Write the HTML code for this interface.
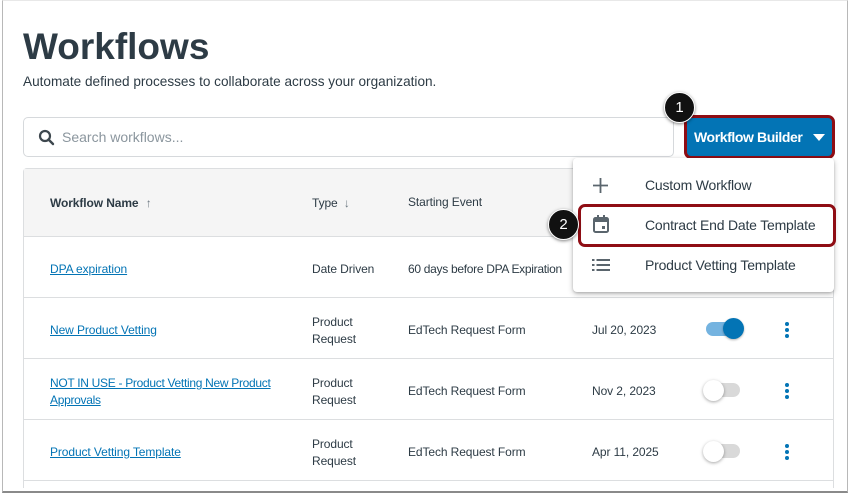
<!DOCTYPE html>
<html><head><meta charset="utf-8"><style>
*{margin:0;padding:0;box-sizing:border-box}
body{width:851px;height:495px;background:#fff;font-family:"Liberation Sans",sans-serif;color:#2d3b45;position:relative;overflow:hidden}
.abs{position:absolute}
.frame{left:2px;top:0;width:846px;height:493px;border-left:1px solid #b8b8b8;border-right:1px solid #b8b8b8;border-bottom:2px solid #8a8a8a;border-top:1px solid #e8e8e8}
h1{position:absolute;left:23px;top:26px;font-size:37px;font-weight:bold;letter-spacing:0}
.sub{left:23px;top:74px;font-size:13.6px}
.search{left:23px;top:117px;width:651px;height:40px;border:1px solid #d6d9dc;border-radius:5px}
.search span{position:absolute;left:38px;top:11px;font-size:14px;color:#8b969e}
.btn{left:686px;top:117px;width:147px;height:40px;background:#0374b5;border-radius:5px;color:#fff;font-size:14px;font-weight:bold;outline:3px solid #8f0d14;outline-offset:-1px}
.btn span{position:absolute;left:8px;top:12px;letter-spacing:-0.4px}
.table{left:23px;top:168px;width:811px;height:320px;border:1px solid #dcdee0;border-bottom:none;border-radius:4px 4px 0 0}
.thead{left:24px;top:169px;width:809px;height:68px;background:#f5f5f5;border-bottom:1px solid #dcdee0}
.row{left:24px;width:809px;height:61px;border-bottom:1px solid #dcdee0}
.t{position:absolute;font-size:12px;color:#2d3b45;letter-spacing:-0.1px}
.lnk{color:#0374b5;text-decoration:underline}
.menu{left:573px;top:158px;width:261px;height:134px;background:#fff;border-radius:4px;box-shadow:0 2px 6px rgba(0,0,0,.25),0 1px 2px rgba(0,0,0,.15)}
.mi{position:absolute;left:72px;font-size:14px;color:#2d3b45;letter-spacing:-0.2px}
.badge{width:31px;height:31px;border-radius:50%;background:#111;color:#fff;font-size:15px;text-align:center;line-height:29px;border:1.5px solid #fff;box-shadow:0 1px 3px rgba(0,0,0,.5)}
.tog{width:34px;height:14px;border-radius:7px}
.knob{width:21px;height:21px;border-radius:50%}
.dots{width:4px}
.dots i{display:block;width:4px;height:4px;border-radius:2px;background:#0374b5;margin-bottom:2px}
</style></head><body>
<div class="abs frame"></div>
<h1>Workflows</h1>
<div class="abs sub">Automate defined processes to collaborate across your organization.</div>
<div class="abs search">
<svg class="abs" style="left:14px;top:11px" width="17" height="17" viewBox="0 0 17 17"><circle cx="7" cy="7" r="5" fill="none" stroke="#3d474e" stroke-width="2.2"/><line x1="10.5" y1="10.5" x2="15" y2="15" stroke="#3d474e" stroke-width="2.4" stroke-linecap="round"/></svg>
<span>Search workflows...</span></div>
<div class="abs btn"><span>Workflow Builder</span><svg class="abs" style="left:127px;top:17px" width="12" height="7" viewBox="0 0 12 7"><path d="M0 0H12L6 7Z" fill="#fff"/></svg></div>

<div class="abs table"></div>
<div class="abs thead">
<div class="t" style="left:26px;top:27px;font-weight:bold">Workflow Name <span style="color:#6b7780;font-weight:normal;margin-left:4px">↑</span></div>
<div class="t" style="left:288px;top:27px">Type <span style="color:#6b7780;margin-left:3px">↓</span></div>
<div class="t" style="left:384px;top:26px">Starting Event</div>
</div>
<div class="abs row" style="top:237px">
<div class="t lnk" style="left:26px;top:25px">DPA expiration</div>
<div class="t" style="left:288px;top:25px">Date Driven</div>
<div class="t" style="left:384px;top:25px;letter-spacing:-0.3px">60 days before DPA Expiration</div>
</div>
<div class="abs row" style="top:298px">
<div class="t lnk" style="left:26px;top:25px">New Product Vetting</div>
<div class="t" style="left:288px;top:16px;line-height:17px">Product<br>Request</div>
<div class="t" style="left:384px;top:25px">EdTech Request Form</div>
<div class="t" style="left:568px;top:25px">Jul 20, 2023</div>
</div>
<div class="abs row" style="top:359px">
<div class="t lnk" style="left:26px;top:16px;line-height:17px;letter-spacing:-0.3px">NOT IN USE - Product Vetting New Product<br>Approvals</div>
<div class="t" style="left:288px;top:16px;line-height:17px">Product<br>Request</div>
<div class="t" style="left:384px;top:25px">EdTech Request Form</div>
<div class="t" style="left:568px;top:25px">Nov 2, 2023</div>
</div>
<div class="abs row" style="top:420px">
<div class="t lnk" style="left:26px;top:25px">Product Vetting Template</div>
<div class="t" style="left:288px;top:16px;line-height:17px">Product<br>Request</div>
<div class="t" style="left:384px;top:25px">EdTech Request Form</div>
<div class="t" style="left:568px;top:25px">Apr 11, 2025</div>
</div>

<div class="abs tog" style="left:706px;top:322px;background:#74b3e0"></div>
<div class="abs knob" style="left:723px;top:318px;background:#0374b5;box-shadow:0 1px 2px rgba(0,0,0,.3)"></div>
<div class="abs tog" style="left:706px;top:383px;background:#d9d9d9"></div>
<div class="abs knob" style="left:703px;top:380px;background:#fff;box-shadow:0 1px 3px rgba(0,0,0,.35)"></div>
<div class="abs tog" style="left:706px;top:444px;background:#d9d9d9"></div>
<div class="abs knob" style="left:703px;top:441px;background:#fff;box-shadow:0 1px 3px rgba(0,0,0,.35)"></div>
<div class="abs dots" style="left:785px;top:322px"><i></i><i></i><i></i></div>
<div class="abs dots" style="left:785px;top:383px"><i></i><i></i><i></i></div>
<div class="abs dots" style="left:785px;top:444px"><i></i><i></i><i></i></div>

<div class="abs menu">
<svg class="abs" style="left:20px;top:20px" width="15" height="15" viewBox="0 0 15 15"><path d="M7.5 0V15M0 7.5H15" stroke="#5a656d" stroke-width="1.8"/></svg>
<div class="mi" style="top:19px">Custom Workflow</div>
<svg class="abs" style="left:20px;top:57px" width="16" height="18" viewBox="0 0 16 18"><rect x="1" y="3" width="14" height="14" rx="1.5" fill="none" stroke="#5a656d" stroke-width="2"/><rect x="1" y="3" width="14" height="4" fill="#5a656d"/><rect x="4" y="0" width="2" height="4" fill="#5a656d"/><rect x="10" y="0" width="2" height="4" fill="#5a656d"/><rect x="9" y="11" width="3" height="3" fill="#5a656d"/></svg>
<div class="mi" style="top:59px">Contract End Date Template</div>
<svg class="abs" style="left:19px;top:101px" width="18" height="12" viewBox="0 0 18 12"><g fill="#5a656d"><rect x="0" y="0" width="2.5" height="2"/><rect x="4.5" y="0" width="13.5" height="2"/><rect x="0" y="5" width="2.5" height="2"/><rect x="4.5" y="5" width="13.5" height="2"/><rect x="0" y="10" width="2.5" height="2"/><rect x="4.5" y="10" width="13.5" height="2"/></g></svg>
<div class="mi" style="top:99px">Product Vetting Template</div>
</div>
<div class="abs" style="left:578px;top:204px;width:258px;height:43px;border:3px solid #8f0d14;border-radius:7px"></div>

<div class="abs badge" style="left:664px;top:92px">1</div>
<div class="abs badge" style="left:548px;top:209px">2</div>
</body></html>
